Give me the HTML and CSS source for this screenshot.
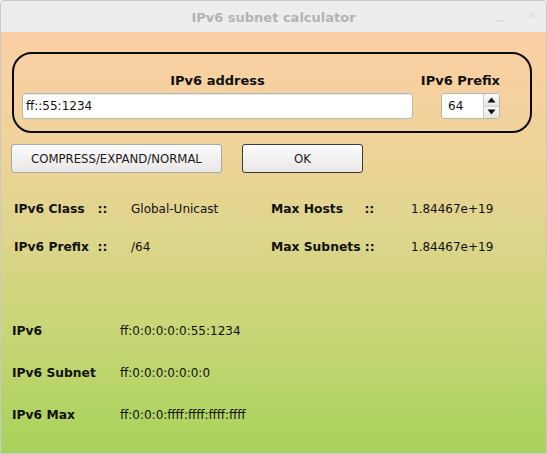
FILE: index.html
```html
<!DOCTYPE html>
<html>
<head>
<meta charset="utf-8">
<link rel="stylesheet" href="styles.css">
</head>
<body>
<div class="window">
  <div class="titlebar">
    <span class="title">IPv6 subnet calculator</span>
    <span class="wbtn min"></span>
    <span class="wbtn close">✕</span>
  </div>
  <div class="content">
    <div class="group">
      <div class="addr-col">
        <div class="glabel">IPv6 address</div>
        <div class="input">ff::55:1234</div>
      </div>
      <div class="prefix-col">
        <div class="glabel">IPv6 Prefix</div>
        <div class="spin">
          <div class="spin-val">64</div>
          <div class="spin-btns">
            <div class="spin-btn"><svg width="9" height="6" viewBox="0 0 9 6"><polygon points="0.5,5.5 8.5,5.5 4.5,0.5" fill="#111"/></svg></div>
            <div class="spin-btn"><svg width="9" height="6" viewBox="0 0 9 6"><polygon points="0.5,0.5 8.5,0.5 4.5,5.5" fill="#111"/></svg></div>
          </div>
        </div>
      </div>
    </div>
    <div class="buttons">
      <div class="btn wide">COMPRESS/EXPAND/NORMAL</div>
      <div class="btn ok">OK</div>
    </div>
    <div class="info">
      <div class="irow">
        <div class="lbl c1">IPv6 Class   ::</div>
        <div class="val c2">Global-Unicast</div>
        <div class="lbl c3">Max Hosts     ::</div>
        <div class="val">1.84467e+19</div>
      </div>
      <div class="irow">
        <div class="lbl c1">IPv6 Prefix  ::</div>
        <div class="val c2">/64</div>
        <div class="lbl c3">Max Subnets ::</div>
        <div class="val">1.84467e+19</div>
      </div>
    </div>
    <div class="results">
      <div class="rrow"><div class="lbl r1">IPv6</div><div class="val">ff:0:0:0:0:0:55:1234</div></div>
      <div class="rrow"><div class="lbl r1">IPv6 Subnet</div><div class="val">ff:0:0:0:0:0:0:0</div></div>
      <div class="rrow"><div class="lbl r1">IPv6 Max</div><div class="val">ff:0:0:0:ffff:ffff:ffff:ffff</div></div>
    </div>
  </div>
</div>
</body>
</html>
```
FILE: styles.css
```css
html, body {
  margin: 0;
  padding: 0;
  width: 547px;
  height: 454px;
  overflow: hidden;
  background: #e9e9e9;
  font-family: "DejaVu Sans", sans-serif;
  color: #111;
}
.window {
  box-sizing: border-box;
  width: 547px;
  height: 454px;
  border: 1px solid #c9c9c9;
  border-radius: 5px 5px 0 0;
  display: flex;
  flex-direction: column;
  overflow: hidden;
}
.titlebar {
  height: 31px;
  flex: 0 0 31px;
  background: #ededed;
  position: relative;
  display: flex;
  align-items: center;
  justify-content: center;
}
.title {
  font-weight: bold;
  font-size: 13px;
  color: #b3b3b3;
  margin-top: 1px;
}
.wbtn {
  position: absolute;
}
.wbtn.min {
  left: 495px;
  top: 19px;
  width: 8px;
  height: 2px;
  background: #e0e0e0;
}
.wbtn.close {
  left: 526px;
  top: 9px;
  font-size: 10px;
  font-weight: bold;
  color: #dedede;
}
.content {
  flex: 1;
  background: linear-gradient(180deg, #fccfa5 0%, #f0d39a 25%, #dcd58a 50%, #c7d675 72%, #a7d259 100%);
  display: flex;
  flex-direction: column;
}
.group {
  box-sizing: border-box;
  margin: 20px 0 0 11px;
  width: 520px;
  height: 81px;
  border: 2px solid #0a0a0a;
  border-radius: 20px;
  display: flex;
  padding: 19px 30px 0 8px;
  justify-content: space-between;
}
.glabel {
  font-weight: bold;
  font-size: 13px;
  line-height: 16px;
  height: 20px;
}
.addr-col {
  width: 391px;
  display: flex;
  flex-direction: column;
  align-items: center;
}
.input {
  box-sizing: border-box;
  width: 391px;
  height: 26px;
  background: #fff;
  border: 1px solid #b7b7b7;
  border-radius: 3px;
  font-size: 12px;
  line-height: 24px;
  padding-left: 3px;
  box-shadow: inset 0 1px 1px rgba(0,0,0,0.08);
}
.prefix-col {
  display: flex;
  flex-direction: column;
  align-items: flex-end;
}
.spin {
  box-sizing: border-box;
  width: 59px;
  height: 26px;
  background: #fff;
  border: 1px solid #b7b7b7;
  border-radius: 3px;
  display: flex;
}
.spin-val {
  flex: 1;
  font-size: 12px;
  line-height: 24px;
  padding-left: 6px;
}
.spin-btns {
  width: 15px;
  display: flex;
  flex-direction: column;
  border-left: 1px solid #c9c9c9;
}
.spin-btn {
  flex: 1;
  display: flex;
  align-items: center;
  justify-content: center;
  background: linear-gradient(#fafafa, #e4e4e4);
}
.spin-btn + .spin-btn {
  border-top: 1px solid #cfcfcf;
}
.buttons {
  display: flex;
  gap: 20px;
  margin: 11px 0 0 10px;
}
.btn {
  box-sizing: border-box;
  height: 29px;
  border: 1px solid #a8a8a8;
  border-radius: 3px;
  background: linear-gradient(#fbfbfb, #e9e7e6);
  font-size: 11.7px;
  display: flex;
  align-items: center;
  justify-content: center;
  color: #1a1a1a;
}
.btn.wide { width: 211px; }
.btn.ok { width: 121px; border-color: #3a3a3a; }
.info {
  margin-top: 17px;
  padding-left: 13px;
}
.irow {
  height: 38px;
  display: flex;
  align-items: center;
}
.lbl {
  font-weight: bold;
  font-size: 12.3px;
  white-space: pre;
}
.val {
  font-size: 12px;
  white-space: pre;
}
.c1 { width: 117px; }
.c2 { width: 140px; }
.c3 { width: 140px; }
.results {
  margin-top: 44px;
  padding-left: 11px;
}
.rrow {
  height: 42px;
  display: flex;
  align-items: center;
}
.r1 { width: 108px; }
```
